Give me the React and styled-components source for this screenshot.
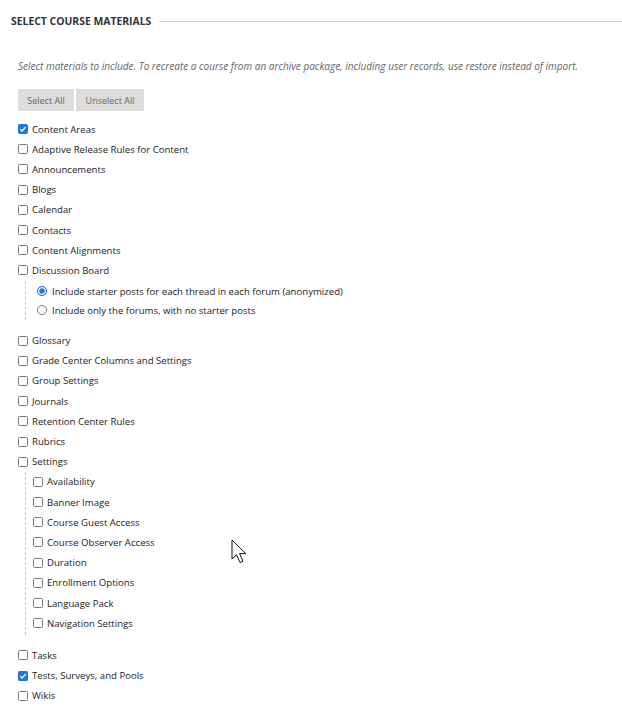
import React from "react";
import styled, { createGlobalStyle } from "styled-components";

const GlobalStyle = createGlobalStyle`
  body {
    margin: 0;
    background: #fff;
    font-family: "Open Sans", "DejaVu Sans", sans-serif;
  }
`;

const Page = styled.div`
  position: relative;
  width: 622px;
  height: 715px;
  overflow: hidden;
  padding-top: 14px;
  box-sizing: border-box;
`;

const Header = styled.div`
  display: flex;
  align-items: center;
  gap: 8px;
  padding-left: 11px;
  height: 14px;
`;

const Title = styled.h2`
  margin: 0;
  font-size: 10.4px;
  font-weight: 700;
  color: #333;
  white-space: nowrap;
`;

const Rule = styled.div`
  flex: 1;
  height: 1px;
  background: #cfcfcf;
`;

const Description = styled.p`
  margin: 30px 0 0 18px;
  font-size: 10px;
  line-height: 16px;
  font-style: italic;
  color: #666;
  white-space: nowrap;
`;

const ButtonBar = styled.div`
  display: flex;
  gap: 2px;
  margin: 15px 0 0 18px;
`;

const Button = styled.button`
  height: 22px;
  width: ${(p) => p.$w}px;
  border: none;
  background: #dcdcdc;
  color: #666;
  font-family: inherit;
  font-size: 9px;
  padding: 0;
  cursor: pointer;
`;

const List = styled.div`
  margin: 8px 0 0 18px;
  display: flex;
  flex-direction: column;
`;

const Row = styled.label`
  display: flex;
  align-items: center;
  gap: ${(p) => p.$gap || 4}px;
  height: ${(p) => p.$h || 20.2}px;
  font-size: 9.6px;
  color: #222;
  white-space: nowrap;
`;

const Box = styled.span`
  width: 10px;
  height: 10px;
  box-sizing: border-box;
  border-radius: 1.5px;
  border: 1px solid ${(p) => (p.$checked ? "#1f74e6" : "#7a7a7a")};
  background: ${(p) => (p.$checked ? "#1f74e6" : "#fff")};
  display: flex;
  align-items: center;
  justify-content: center;
  flex-shrink: 0;
`;

const Radio = styled.span`
  width: 10px;
  height: 10px;
  box-sizing: border-box;
  border-radius: 50%;
  border: 1px solid ${(p) => (p.$checked ? "#1f74e6" : "#7a7a7a")};
  background: ${(p) => (p.$checked ? "#1f74e6" : "#fff")};
  box-shadow: ${(p) => (p.$checked ? "inset 0 0 0 1.3px #fff" : "none")};
  flex-shrink: 0;
`;

const SubGroup = styled.div`
  margin: 0 0 ${(p) => p.$mb}px 7px;
  padding: ${(p) => p.$pt}px 0 ${(p) => p.$pb}px ${(p) => p.$indent}px;
  border-left: 1px dashed #c8c8c8;
  display: flex;
  flex-direction: column;
`;

const Cursor = styled.svg`
  position: absolute;
  left: 231px;
  top: 539px;
`;

const Check = () => (
  <svg width="8" height="8" viewBox="0 0 8 8">
    <path d="M1.3 4.2 L3.1 6 L6.8 1.9" fill="none" stroke="#fff" strokeWidth="1.4" />
  </svg>
);

const CheckRow = ({ label, checked }) => (
  <Row>
    <Box $checked={checked}>{checked && <Check />}</Box>
    {label}
  </Row>
);

const top = [
  ["Content Areas", true],
  ["Adaptive Release Rules for Content"],
  ["Announcements"],
  ["Blogs"],
  ["Calendar"],
  ["Contacts"],
  ["Content Alignments"],
  ["Discussion Board"],
];

const middle = [
  "Glossary",
  "Grade Center Columns and Settings",
  "Group Settings",
  "Journals",
  "Retention Center Rules",
  "Rubrics",
  "Settings",
];

const settings = [
  "Availability",
  "Banner Image",
  "Course Guest Access",
  "Course Observer Access",
  "Duration",
  "Enrollment Options",
  "Language Pack",
  "Navigation Settings",
];

const bottom = [["Tasks"], ["Tests, Surveys, and Pools", true], ["Wikis"]];

export default function App() {
  return (
    <Page>
      <GlobalStyle />
      <Header>
        <Title>SELECT COURSE MATERIALS</Title>
        <Rule />
      </Header>
      <Description>
        Select materials to include. To recreate a course from an archive package, including user
        records, use restore instead of import.
      </Description>
      <ButtonBar>
        <Button $w={56}>Select All</Button>
        <Button $w={68}>Unselect All</Button>
      </ButtonBar>
      <List>
        {top.map(([l, c]) => (
          <CheckRow key={l} label={l} checked={c} />
        ))}
        <SubGroup $indent={11} $pt={1} $pb={0} $mb={11}>
          <Row $h={19} $gap={5}>
            <Radio $checked />
            Include starter posts for each thread in each forum (anonymized)
          </Row>
          <Row $h={19} $gap={5}>
            <Radio />
            Include only the forums, with no starter posts
          </Row>
        </SubGroup>
        {middle.map((l) => (
          <CheckRow key={l} label={l} />
        ))}
        <SubGroup $indent={7} $pt={0} $pb={2} $mb={10}>
          {settings.map((l) => (
            <CheckRow key={l} label={l} />
          ))}
        </SubGroup>
        {bottom.map(([l, c]) => (
          <CheckRow key={l} label={l} checked={c} />
        ))}
      </List>
      <Cursor width="20" height="28" viewBox="0 0 20 28">
        <path
          d="M1 1 L1 20 L5.5 15.8 L9 23.5 L12 22.2 L8.6 14.6 L14.8 14.6 Z"
          fill="#fff"
          stroke="#111"
          strokeWidth="1"
          strokeLinejoin="miter"
        />
      </Cursor>
    </Page>
  );
}
